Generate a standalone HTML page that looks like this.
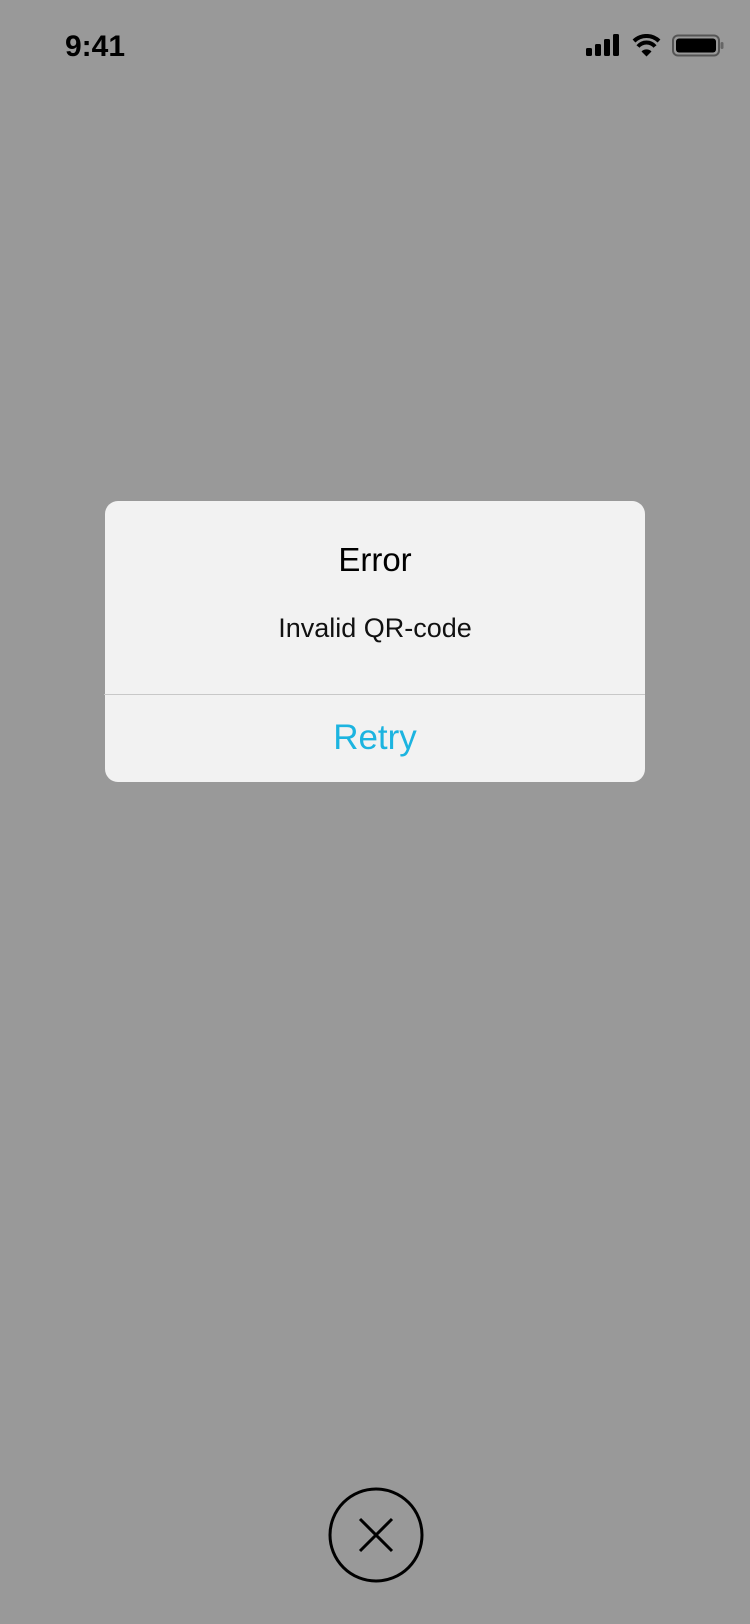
<!DOCTYPE html>
<html><head><style>
html,body{margin:0;padding:0;}
body{width:750px;height:1624px;background:#999999;position:relative;overflow:hidden;font-family:"Liberation Sans",sans-serif;}
.time{position:absolute;left:65px;top:28px;font-size:30px;font-weight:bold;color:#000;line-height:38px;}
.dlg{position:absolute;left:105px;top:501px;width:540px;height:281px;background:#f2f2f2;border-radius:13px;}
.t{position:absolute;left:0;right:0;top:538px;text-align:center;font-size:33px;color:#000;line-height:44px;}
.m{position:absolute;left:0;right:0;top:608px;text-align:center;font-size:27px;color:#111;line-height:40px;}
.div{position:absolute;left:104px;width:541px;top:694px;height:1px;background:#c8c8c8;}
.r{position:absolute;left:0;right:0;top:715px;text-align:center;font-size:35px;color:#1cb4e0;line-height:46px;}
</style></head><body>
<div class="time">9:41</div>
<svg style="position:absolute;left:585px;top:34px" width="140" height="26" viewBox="0 0 140 26">
<rect x="1" y="14" width="6" height="8" rx="1.5" fill="#000"/>
<rect x="10" y="10" width="6" height="12" rx="1.5" fill="#000"/>
<rect x="19" y="5" width="6" height="17" rx="1.5" fill="#000"/>
<rect x="28" y="0" width="6" height="22" rx="1.5" fill="#000"/>
<path d="M49 7 A18 18 0 0 1 74 7" stroke="#000" stroke-width="4" fill="none"/>
<path d="M53 12.5 A11 11 0 0 1 70 12.5" stroke="#000" stroke-width="4" fill="none"/>
<path d="M56.5 17.5 L61.5 22.5 L66.5 17.5 A7 7 0 0 0 56.5 17.5Z" fill="#000"/>
<rect x="88" y="1.5" width="46" height="20" rx="5" stroke="#555" stroke-width="2" fill="none"/>
<rect x="91" y="4.5" width="40" height="14" rx="3" fill="#000"/>
<rect x="135.5" y="8" width="3" height="7" rx="1.5" fill="#666"/>
</svg>
<div class="dlg"></div>
<div class="t">Error</div>
<div class="m">Invalid QR-code</div>
<div class="div"></div>
<div class="r">Retry</div>
<svg style="position:absolute;left:326px;top:1485px" width="100" height="100" viewBox="0 0 100 100">
<circle cx="50" cy="50" r="46" stroke="#000" stroke-width="3" fill="none"/>
<path d="M34 34 L66 66 M66 34 L34 66" stroke="#000" stroke-width="3"/>
</svg>
</body></html>
